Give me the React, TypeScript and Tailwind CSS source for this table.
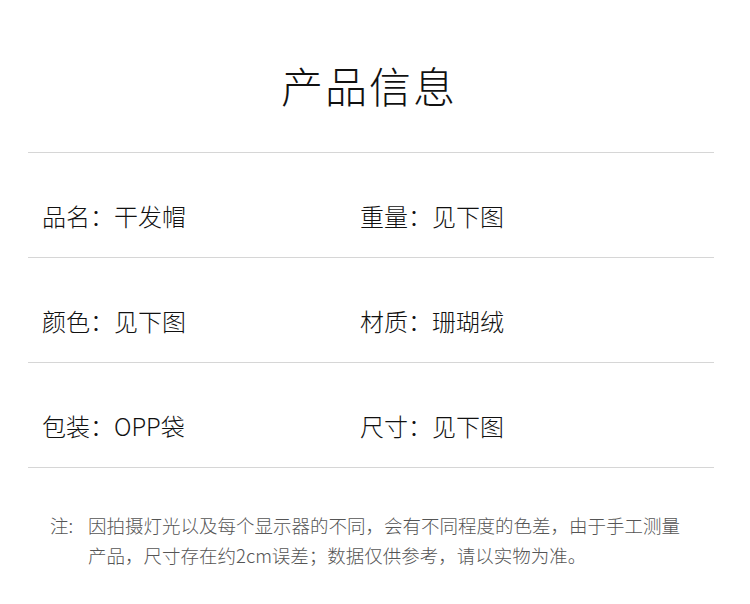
const rows: [string, string][][] = [
  [["品名", "干发帽"], ["重量", "见下图"]],
  [["颜色", "见下图"], ["材质", "珊瑚绒"]],
  [["包装", "OPP袋"], ["尺寸", "见下图"]],
];

export default function App() {
  return (
    <div
      className="w-[750px] h-[604px] bg-white text-[#222]"
      style={{ fontFamily: '"Noto Sans CJK SC", "Noto Sans", sans-serif' }}
    >
      <div className="pt-[57px] h-[152px] text-center text-[42px] leading-[56px] font-light tracking-[2px] text-[#111] pr-[12px]">
        产品信息
      </div>
      <div className="ml-[28px] mr-[36px] border-t border-[#d6d6d6]">
        {rows.map((row, i) => (
          <div key={i} className="h-[105px] border-b border-[#d6d6d6] flex pt-[45px] font-light text-[#111]">
            <div className="w-[332px] pl-[14px] text-[24px] leading-[36px]">
              {row[0][0]}：{row[0][1]}
            </div>
            <div className="text-[24px] leading-[36px]">
              {row[1][0]}：{row[1][1]}
            </div>
          </div>
        ))}
      </div>
      <div className="pt-[42px] pl-[50px] text-[18.5px] leading-[30px] text-[#555] font-light">
        <div className="flex">
          <span className="w-[38px] shrink-0">注:</span>
          <span>
            因拍摄灯光以及每个显示器的不同，会有不同程度的色差，由于手工测量
            <br />
            产品，尺寸存在约2cm误差；数据仅供参考，请以实物为准。
          </span>
        </div>
      </div>
    </div>
  );
}
